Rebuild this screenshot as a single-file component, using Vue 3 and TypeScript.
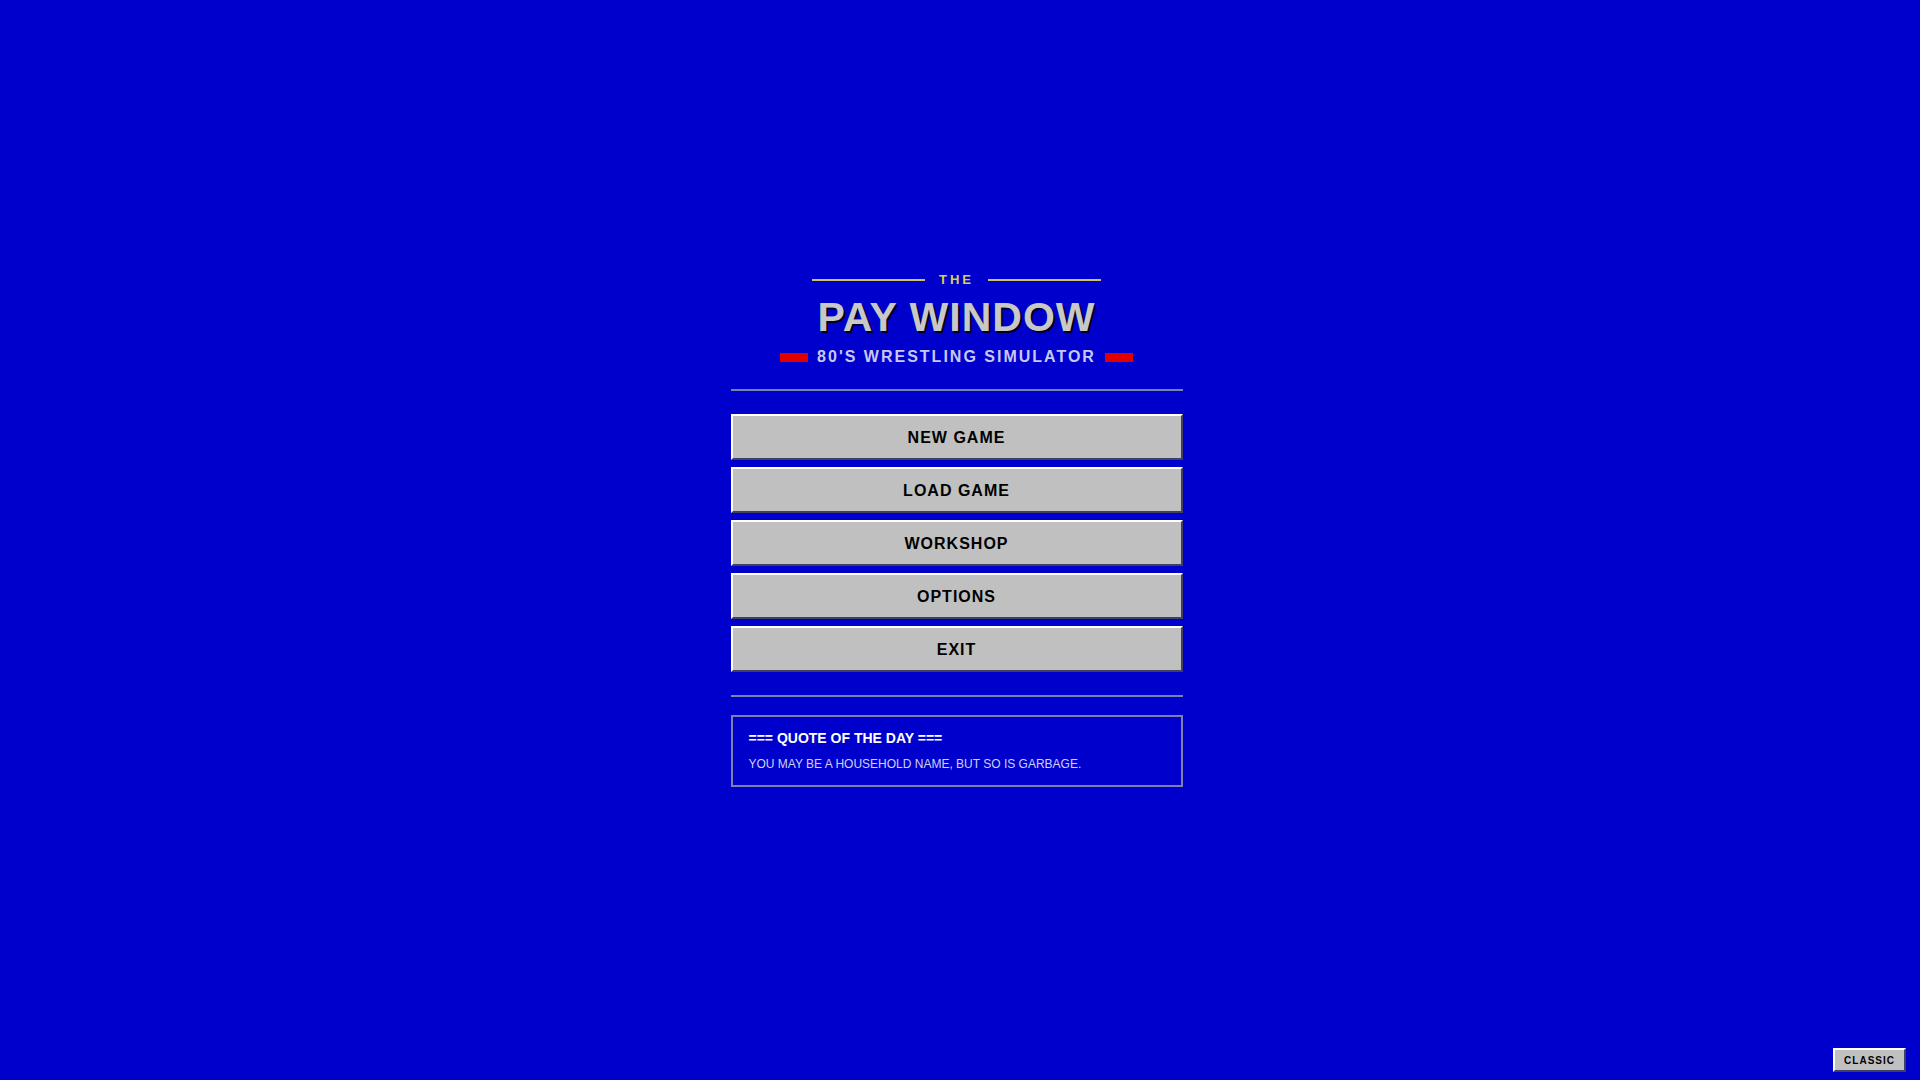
<script setup lang="ts">
interface MenuItem {
  id: string
  label: string
}

const menu: MenuItem[] = [
  { id: 'new', label: 'NEW GAME' },
  { id: 'load', label: 'LOAD GAME' },
  { id: 'workshop', label: 'WORKSHOP' },
  { id: 'options', label: 'OPTIONS' },
  { id: 'exit', label: 'EXIT' },
]

const quote: string = 'YOU MAY BE A HOUSEHOLD NAME, BUT SO IS GARBAGE.'
</script>

<template>
  <div class="screen">
    <main class="panel">
      <header class="brand">
        <div class="the"><span class="rule"></span><span>THE</span><span class="rule"></span></div>
        <h1 class="title">PAY WINDOW</h1>
        <div class="tagline">
          <span class="bar"></span><span>80'S WRESTLING SIMULATOR</span><span class="bar"></span>
        </div>
      </header>

      <nav class="menu" aria-label="Main menu">
        <button v-for="item in menu" :key="item.id" type="button" class="key">{{ item.label }}</button>
      </nav>

      <section class="quote">
        <h2 class="quote-title">=== QUOTE OF THE DAY ===</h2>
        <p class="quote-text">{{ quote }}</p>
      </section>
    </main>

    <button type="button" class="key theme">CLASSIC</button>
  </div>
</template>

<style>
body {
  background: #0000cc;
}
</style>

<style scoped>
.screen {
  box-sizing: border-box;
  min-height: 100vh;
  display: flex;
  align-items: center;
  justify-content: center;
  padding: 0 7px 21px 0;
  background: #0000cc;
  font-family: "Liberation Sans", Arial, sans-serif;
}

.panel {
  width: 452px;
  max-width: 100%;
}

.brand {
  display: flex;
  flex-direction: column;
  align-items: center;
  padding-bottom: 22px;
  border-bottom: 2px solid #8080b0;
}

.the {
  display: flex;
  align-items: center;
  gap: 14px;
  color: #dcd048;
  font-size: 13px;
  font-weight: 700;
  line-height: 16px;
  letter-spacing: 3px;
}

.rule {
  width: 113px;
  height: 2px;
  background: #ccc468;
}

.title {
  margin: 4px 0 5px;
  color: #c8c8c8;
  font-size: 41px;
  line-height: 50px;
  letter-spacing: 1px;
  text-shadow: 2px 2px 0 #000022;
}

.tagline {
  display: flex;
  align-items: center;
  gap: 9px;
  color: #c8c8f0;
  font-size: 16px;
  font-weight: 700;
  line-height: 20px;
  letter-spacing: 2px;
}

.bar {
  width: 28px;
  height: 9px;
  background: #e00000;
}

.menu {
  display: flex;
  flex-direction: column;
  gap: 7px;
  padding: 23px 0;
  border-bottom: 2px solid #8080b0;
}

.key {
  box-sizing: border-box;
  height: 46px;
  padding: 2px 0 0;
  border: 2px solid;
  border-color: #ffffff #404060 #404060 #ffffff;
  border-radius: 0;
  background: #c0c0c0;
  color: #000000;
  font-family: inherit;
  font-size: 16px;
  font-weight: 700;
  letter-spacing: 1px;
  cursor: pointer;
}

.quote {
  margin-top: 18px;
  padding: 12px 16px;
  border: 2px solid #8080b0;
}

.quote-title {
  margin: 0 0 8px;
  color: #ffffff;
  font-size: 14px;
  line-height: 18px;
}

.quote-text {
  margin: 0;
  color: #d0d0f4;
  font-size: 12px;
  line-height: 18px;
}

.theme {
  position: absolute;
  right: 14px;
  bottom: 8px;
  height: 24px;
  padding: 0 9px;
  font-size: 10px;
}
</style>
